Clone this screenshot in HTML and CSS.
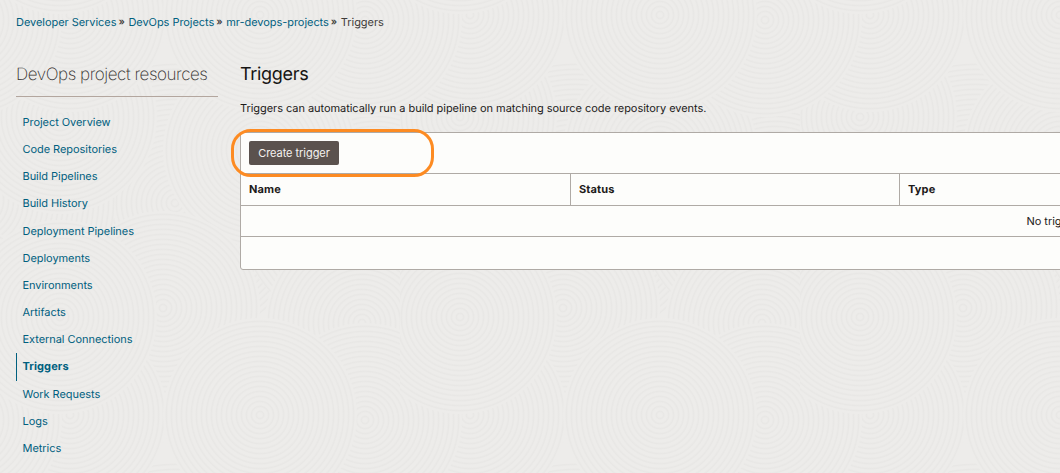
FILE: index.html
```
<!DOCTYPE html>
<html lang="en">
<head>
<meta charset="utf-8">
<title>Triggers</title>
<link rel="stylesheet" href="styles.css">
</head>
<body>
<svg class="texture" width="1060" height="473" aria-hidden="true">
  <defs>
    <radialGradient id="rings" gradientUnits="userSpaceOnUse" cx="0" cy="0" r="5" spreadMethod="repeat">
      <stop offset="0" stop-color="#edecea"/>
      <stop offset=".4" stop-color="#edecea"/>
      <stop offset=".75" stop-color="#e8e7e5"/>
      <stop offset="1" stop-color="#edecea"/>
    </radialGradient>
    <circle id="disc" r="97" fill="url(#rings)"/>
    <circle id="wide" r="140" fill="url(#rings)"/>
    <g id="swirls">
      <use href="#wide" x="175" y="203"/>
      <use href="#wide" x="-25" y="200"/>
      <use href="#wide" x="375" y="200"/>
      <use href="#disc" x="60" y="117"/>
      <use href="#disc" x="260" y="150"/>
      <use href="#disc" x="163" y="308"/>
      <use href="#disc" x="362" y="323"/>
      <use href="#disc" x="-38" y="323"/>
      <use href="#disc" x="70" y="15"/>
      <use href="#disc" x="70" y="415"/>
      <use href="#disc" x="365" y="20"/>
      <use href="#disc" x="-35" y="20"/>
      <use href="#disc" x="365" y="420"/>
      <use href="#disc" x="-35" y="420"/>
      <use href="#disc" x="260" y="15"/>
      <use href="#disc" x="260" y="415"/>
      <use href="#disc" x="60" y="317"/>
      <use href="#disc" x="60" y="-83"/>
    </g>
    <pattern id="tile" width="400" height="400" patternUnits="userSpaceOnUse">
      <use href="#swirls"/>
    </pattern>
  </defs>
  <rect width="1060" height="473" fill="url(#tile)"/>
</svg>
<div class="page">
  <nav class="crumbs">
    <a>Developer Services</a><span class="sep">»</span><a>DevOps Projects</a><span class="sep">»</span><a>mr-devops-projects</a><span class="sep">»</span><span>Triggers</span>
  </nav>
  <div class="columns">
    <aside class="side">
      <h2 class="side-title"><span>DevOps project resources</span></h2>
      <ul class="menu">
        <li><a>Project Overview</a></li>
        <li><a>Code Repositories</a></li>
        <li><a>Build Pipelines</a></li>
        <li><a>Build History</a></li>
        <li><a>Deployment Pipelines</a></li>
        <li><a>Deployments</a></li>
        <li><a>Environments</a></li>
        <li><a>Artifacts</a></li>
        <li><a>External Connections</a></li>
        <li class="current"><a>Triggers</a></li>
        <li><a>Work Requests</a></li>
        <li><a>Logs</a></li>
        <li><a>Metrics</a></li>
      </ul>
    </aside>
    <main class="main">
      <h1 class="title">Triggers</h1>
      <p class="intro">Triggers can automatically run a build pipeline on matching source code repository events.</p>
      <section class="panel">
        <div class="toolbar"><button class="create">Create trigger</button><span class="marker"></span></div>
        <div class="head"><div>Name</div><div>Status</div><div>Type</div></div>
        <div class="empty">No triggers found.</div>
        <div class="foot"></div>
      </section>
    </main>
  </div>
</div>
</body>
</html>
```
FILE: styles.css
```
* { box-sizing: border-box; }
body {
  margin: 0;
  width: 1060px;
  height: 473px;
  overflow: hidden;
  position: relative;
  background: #edecea;
  color: #1d1b1a;
  font: 11px/16px Inter, "Liberation Sans", sans-serif;
  letter-spacing: -.05px;
  text-rendering: geometricPrecision;
}
.texture { position: absolute; inset: 0; z-index: -1; }
.page { padding: 14px 0 0 16px; overflow: hidden; }
a { color: #00607f; }
.crumbs { display: flex; height: 16px; color: #3f3c3a; white-space: nowrap; }
.sep { width: 12px; padding-left: 2px; letter-spacing: 0; font-size: 10px; font-weight: 600; }
.columns { display: flex; gap: 22px; }
.side { flex: 0 0 202px; }
.side-title {
  margin: 0;
  height: 67px;
  padding-top: 33px;
  border-bottom: 1px solid #b3a69e;
  font-size: 17px;
  line-height: 24px;
  font-weight: 200;
  letter-spacing: -.44px;
  color: #33302e;
  white-space: nowrap;
}
.menu { list-style: none; margin: 12px 0 0; padding: 0; }
.menu li { height: 27.16px; padding-left: 6.5px; line-height: 27px; }
.menu .current { border-left: 1px solid #00607f; padding-left: 5.5px; font-weight: 700; letter-spacing: .1px; }
.main { flex: 0 0 1648px; }
.title { margin: 0; padding-top: 32px; font-size: 18px; line-height: 26px; font-weight: 400; letter-spacing: -.32px; color: #161513; }
.intro { margin: 12px 0 0; }
.panel { margin-top: 16px; border: 1px solid #afaaa5; border-radius: 3px; background: #fdfdfb; }
.toolbar { position: relative; height: 41px; padding: 8px; border-bottom: 1px solid #afaaa5; }
.create {
  display: block;
  width: 90px;
  height: 24px;
  padding: 0;
  border: 0;
  border-radius: 2px;
  background: #5b524e;
  color: #f5f2f0;
  font: inherit;
  letter-spacing: inherit;
}
.marker { position: absolute; left: -10px; top: -4px; width: 203px; height: 48px; border: 3px solid #fd8b22; border-radius: 20px; }
.head { display: flex; height: 32px; border-bottom: 1px solid #afaaa5; font-weight: 700; line-height: 30px; letter-spacing: .15px; }
.head div { width: 329px; padding-left: 8px; }
.head div + div { border-left: 1px solid #afaaa5; }
.empty { height: 31px; border-bottom: 1px solid #afaaa5; line-height: 31px; padding-left: 785.5px; }
.foot { height: 32px; }
```
